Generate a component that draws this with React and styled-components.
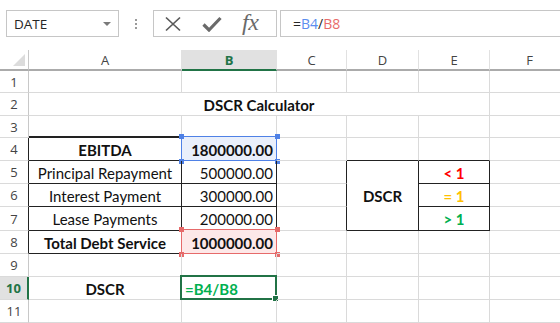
import React from "react";
import styled, { createGlobalStyle } from "styled-components";

const GlobalStyle = createGlobalStyle`
  html, body {
    margin: 0;
    padding: 0;
    background: #fff;
    overflow: hidden;
  }
  body {
    font-family: "Open Sans", "Noto Sans", sans-serif;
  }
`;

const GREEN = "#217346";
const GRID = "#dadada";

const Page = styled.div`
  width: 560px;
  height: 323px;
  overflow: hidden;
`;

const Toolbar = styled.div`
  display: flex;
  align-items: center;
  height: 27px;
  padding: 10px 0 0 6px;
`;

const NameBox = styled.div`
  position: relative;
  display: flex;
  align-items: center;
  box-sizing: border-box;
  width: 113px;
  height: 27px;
  padding-left: 7px;
  border: 1px solid #c6c6c6;
  font-size: 13.5px;
  color: #262626;
`;

const Arrow = styled.span`
  position: absolute;
  right: 7px;
  top: 11px;
  border-left: 4px solid transparent;
  border-right: 4px solid transparent;
  border-top: 4px solid #7a7a7a;
`;

const Dots = styled.div`
  display: flex;
  flex-direction: column;
  gap: 2px;
  margin: 0 16px 0 16px;
  span {
    width: 2px;
    height: 2px;
    background: #9a9a9a;
  }
`;

const FxBox = styled.div`
  display: flex;
  align-items: center;
  box-sizing: border-box;
  width: 124px;
  height: 27px;
  border: 1px solid #c6c6c6;
  padding-left: 10px;
  gap: 20px;
`;

const FxIcon = styled.div`
  display: flex;
  align-items: center;
  justify-content: center;
`;

const FxText = styled.span`
  font-family: "Liberation Serif", "DejaVu Serif", serif;
  font-style: italic;
  font-size: 24px;
  color: #6a6a6a;
  line-height: 1;
  margin-top: -3px;
  letter-spacing: -0.5px;
`;

const FormulaInput = styled.div`
  display: flex;
  align-items: center;
  box-sizing: border-box;
  flex: 1;
  height: 27px;
  margin-left: 3px;
  margin-right: -4px;
  padding-left: 12px;
  border: 1px solid #c6c6c6;
  font-size: 14px;
  color: #262626;
`;

const Ref = styled.span`
  color: ${p => p.$color};
`;

const Sheet = styled.div`
  display: grid;
  grid-template-columns: 29px 153px 95px 70px 72px 71px 80px;
  grid-template-rows: 21px 22px 23px 22px 23px 23px 23px 24px 23px 23px 23px 23px;
  margin-top: 13px;
  font-family: "Lato", "Open Sans", sans-serif;
`;

const ColHeader = styled.div`
  display: flex;
  align-items: center;
  justify-content: center;
  box-sizing: border-box;
  border-right: 1px solid #e1e1e1;
  border-bottom: 2px solid ${p => (p.$active ? GREEN : "#ababab")};
  background: ${p => (p.$active ? "#e1e1e1" : "#fff")};
  color: ${p => (p.$active ? GREEN : "#444")};
  font-family: "Open Sans", sans-serif;
  font-weight: ${p => (p.$active ? 700 : 400)};
  font-size: 13px;
`;

const Corner = styled.div`
  position: relative;
  box-sizing: border-box;
  border-right: 1px solid #c8c8c8;
  border-bottom: 2px solid #ababab;
  &::after {
    content: "";
    position: absolute;
    right: 3px;
    bottom: 3px;
    border-left: 12px solid transparent;
    border-bottom: 12px solid #dcdcdc;
  }
`;

const RowHeader = styled.div`
  display: flex;
  align-items: center;
  justify-content: center;
  box-sizing: border-box;
  grid-column: 1;
  grid-row: ${p => p.$row};
  border-bottom: 1px solid ${GRID};
  border-right: ${p => (p.$active ? `2px solid ${GREEN}` : `1px solid ${p.$edge || "#c8c8c8"}`)};
  background: ${p => (p.$active ? "#e1e1e1" : "#fff")};
  color: ${p => (p.$active ? GREEN : "#444")};
  font-family: "Open Sans", sans-serif;
  font-weight: ${p => (p.$active ? 700 : 400)};
  font-size: 13px;
`;

const Cell = styled.div`
  position: relative;
  display: flex;
  align-items: center;
  justify-content: ${p => p.$align || "flex-start"};
  box-sizing: border-box;
  padding: 1px 3px 0;
  grid-column: ${p => p.$col} / span ${p => p.$span || 1};
  grid-row: ${p => p.$row} / span ${p => p.$rows || 1};
  border-right: 1px solid ${p => p.$rc || GRID};
  border-bottom: ${p => p.$bw || 1}px solid ${p => p.$bc || GRID};
  font-size: 15px;
  font-weight: ${p => (p.$bold ? 700 : 400)};
  color: ${p => p.$color || "#111"};
  white-space: nowrap;
`;

const Range = styled.div`
  position: absolute;
  left: -1px;
  top: -2px;
  right: -1px;
  bottom: -1px;
  border: 1.5px solid ${p => p.$color};
  background: ${p => p.$fill};
  span {
    position: absolute;
    width: 5px;
    height: 5px;
    background: ${p => p.$color};
  }
  span:nth-child(1) { left: -3.5px; top: -3.5px; }
  span:nth-child(2) { right: -3.5px; top: -3.5px; }
  span:nth-child(3) { left: -3.5px; bottom: -3.5px; }
  span:nth-child(4) { right: -3.5px; bottom: -3.5px; }
`;

const CellText = styled.span`
  position: relative;
  z-index: 1;
`;

const Active = styled.div`
  position: absolute;
  left: -2px;
  top: -2px;
  right: -1px;
  bottom: -1px;
  border: 2px solid ${GREEN};
  &::after {
    content: "";
    position: absolute;
    right: -4px;
    bottom: -4px;
    width: 5px;
    height: 5px;
    background: ${GREEN};
    border: 1px solid #fff;
  }
`;

const cols = ["A", "B", "C", "D", "E", "F", ""];
const BLACK = "#222";

// grid positions: col 2 = A, row 2 = sheet row 1
const cells = [
  { col: 2, row: 3, span: 5, bold: true, align: "center", text: "DSCR Calculator" },
  { col: 2, row: 5, bold: true, align: "center", text: "EBITDA", rc: BLACK, bc: BLACK },
  { col: 3, row: 5, bold: true, align: "flex-end", text: "1800000.00", rc: BLACK, bc: BLACK, range: ["#4f81e6", "#e9effb"] },
  { col: 2, row: 6, align: "center", text: "Principal Repayment", rc: BLACK, bc: BLACK },
  { col: 3, row: 6, align: "flex-end", text: "500000.00", rc: BLACK, bc: BLACK },
  { col: 5, row: 6, rows: 3, bold: true, align: "center", text: "DSCR", rc: BLACK, bc: BLACK },
  { col: 6, row: 6, bold: true, align: "center", text: "< 1", color: "#ff0000", rc: BLACK, bc: BLACK },
  { col: 2, row: 7, align: "center", text: "Interest Payment", rc: BLACK, bc: BLACK },
  { col: 3, row: 7, align: "flex-end", text: "300000.00", rc: BLACK, bc: BLACK },
  { col: 6, row: 7, bold: true, align: "center", text: "= 1", color: "#ffc000", rc: BLACK, bc: BLACK },
  { col: 2, row: 8, align: "center", text: "Lease Payments", rc: BLACK, bc: BLACK },
  { col: 3, row: 8, align: "flex-end", text: "200000.00", rc: BLACK, bc: BLACK },
  { col: 6, row: 8, bold: true, align: "center", text: "> 1", color: "#00b050", rc: BLACK, bc: BLACK },
  { col: 2, row: 9, bold: true, align: "center", text: "Total Debt Service", rc: BLACK, bc: BLACK },
  { col: 3, row: 9, bold: true, align: "flex-end", text: "1000000.00", rc: BLACK, bc: BLACK, range: ["#e66a6a", "#fde8e8"] },
  { col: 2, row: 11, bold: true, align: "center", text: "DSCR" },
  { col: 3, row: 11, bold: true, text: "=B4/B8", color: "#00b050", active: true },
  // borders above / beside the tables
  { col: 2, row: 4, bc: BLACK, bw: 2 },
  { col: 3, row: 4, bc: BLACK, bw: 2 },
  { col: 5, row: 5, bc: BLACK },
  { col: 6, row: 5, bc: BLACK },
  { col: 4, row: 6, rc: BLACK },
  { col: 4, row: 7, rc: BLACK },
  { col: 4, row: 8, rc: BLACK },
];

function buildCells() {
  const map = {};
  cells.forEach(c => (map[`${c.col},${c.row}`] = c));
  const covered = new Set();
  cells.forEach(c => {
    for (let dc = 0; dc < (c.span || 1); dc++)
      for (let dr = 0; dr < (c.rows || 1); dr++)
        if (dc || dr) covered.add(`${c.col + dc},${c.row + dr}`);
  });
  const out = [];
  for (let row = 2; row <= 12; row++) {
    for (let col = 2; col <= 8; col++) {
      const key = `${col},${row}`;
      if (covered.has(key)) continue;
      const c = map[key] || { col, row };
      out.push(
        <Cell
          key={key}
          $col={col}
          $row={row}
          $span={c.span}
          $rows={c.rows}
          $align={c.align}
          $bold={c.bold}
          $color={c.color}
          $rc={c.rc}
          $bc={c.bc}
          $bw={c.bw}
        >
          {c.range && (
            <Range $color={c.range[0]} $fill={c.range[1]}>
              <span />
              <span />
              <span />
              <span />
            </Range>
          )}
          {c.active && <Active />}
          {c.text && <CellText>{c.text}</CellText>}
        </Cell>
      );
    }
  }
  return out;
}

export default function App() {
  return (
    <Page>
      <GlobalStyle />
      <Toolbar>
        <NameBox>
          DATE
          <Arrow />
        </NameBox>
        <Dots>
          <span />
          <span />
          <span />
        </Dots>
        <FxBox>
          <FxIcon>
            <svg width="18" height="16" viewBox="0 0 18 16">
              <path d="M2 1.5 L16 14.5 M16 1.5 L2 14.5" stroke="#5a5a5a" strokeWidth="1.7" fill="none" />
            </svg>
          </FxIcon>
          <FxIcon>
            <svg width="20" height="16" viewBox="0 0 20 16">
              <path d="M1.5 8.5 L7 14 L18.5 2" stroke="#6a6a6a" strokeWidth="3.2" fill="none" />
            </svg>
          </FxIcon>
          <FxIcon>
            <FxText>fx</FxText>
          </FxIcon>
        </FxBox>
        <FormulaInput>
          =<Ref $color="#5b8def">B4</Ref>/<Ref $color="#e86a6a">B8</Ref>
        </FormulaInput>
      </Toolbar>
      <Sheet>
        <Corner />
        {cols.map((c, i) => (
          <ColHeader key={i} $active={c === "B"}>
            {c}
          </ColHeader>
        ))}
        {Array.from({ length: 11 }, (_, i) => (
          <RowHeader
            key={i}
            $row={i + 2}
            $active={i + 1 === 10}
            $edge={i + 1 >= 4 && i + 1 <= 8 ? BLACK : null}
          >
            {i + 1}
          </RowHeader>
        ))}
        {buildCells()}
      </Sheet>
    </Page>
  );
}
